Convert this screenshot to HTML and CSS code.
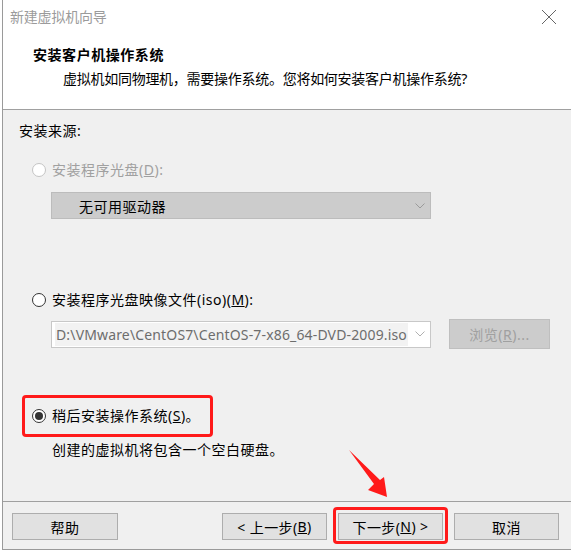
FILE: index.html
```html
<!DOCTYPE html>
<html lang="zh-CN">
<head>
<meta charset="utf-8">
<title>新建虚拟机向导</title>
<link rel="stylesheet" href="styles.css">
</head>
<body>
<div class="window">
  <div class="header">
    <div class="titlebar">
      <span class="title">新建虚拟机向导</span>
      <svg class="close" width="16" height="16" viewBox="0 0 16 16"><path d="M1 1 L15 15 M15 1 L1 15" stroke="#666" stroke-width="1" fill="none"/></svg>
    </div>
    <div class="heading">安装客户机操作系统</div>
    <div class="subtext">虚拟机如同物理机，需要操作系统。您将如何安装客户机操作系统?</div>
  </div>
  <div class="content">
    <div class="source-label">安装来源:</div>
    <div class="radio-row row1 disabled">
      <span class="radio"></span>
      <span class="label">安装程序光盘(<u>D</u>):</span>
    </div>
    <div class="combo combo-disabled">
      <span class="combo-text">无可用驱动器</span>
      <svg class="chev" width="10" height="6" viewBox="0 0 10 6"><polyline points="0.5,0.5 5,5 9.5,0.5" fill="none" stroke="#9a9a9a" stroke-width="1"/></svg>
    </div>
    <div class="radio-row row2">
      <span class="radio"></span>
      <span class="label">安装程序光盘映像文件(iso)(<u>M</u>):</span>
    </div>
    <div class="iso-row">
      <div class="combo combo-white">
        <span class="combo-text path"><span class="sel">D:\VMware\CentOS7\CentOS-7-x86_64-DVD-2009.iso</span></span>
        <svg class="chev" width="10" height="6" viewBox="0 0 10 6"><polyline points="0.5,0.5 5,5 9.5,0.5" fill="none" stroke="#b0b0b0" stroke-width="1"/></svg>
      </div>
      <div class="browse">浏览(<u>R</u>)...</div>
    </div>
    <div class="radio-row row3">
      <span class="radio checked"></span>
      <span class="label">稍后安装操作系统(<u>S</u>)。</span>
    </div>
    <div class="desc">创建的虚拟机将包含一个空白硬盘。</div>
    <div class="footer">
      <div class="btn">帮助</div>
      <div class="spacer"></div>
      <div class="btn">&lt; 上一步(<u>B</u>)</div>
      <div class="btn">下一步(<u>N</u>) &gt;</div>
      <div class="btn">取消</div>
    </div>
  </div>
  <div class="mark mark-radio"></div>
  <div class="mark mark-next"></div>
  <svg class="arrow" width="60" height="60" viewBox="0 0 60 60">
    <polygon points="1,0 32,30 36,27 39,47 20,40 26,34" fill="#ff1a1a"/>
  </svg>
</div>
</body>
</html>
```
FILE: styles.css
```css
html, body {
  margin: 0;
  padding: 0;
  background: #ffffff;
}
body {
  font-family: "Noto Sans", "Noto Sans CJK SC", sans-serif;
  font-size: 14px;
  color: #000;
}
.window {
  position: relative;
  margin-left: 2px;
  width: 568px;
  height: 549px;
  border-left: 1px solid #9a9a9a;
  border-bottom: 1px solid #9a9a9a;
  background: #f0f0f0;
  display: flex;
  flex-direction: column;
  overflow: hidden;
}
.header {
  background: #ffffff;
  height: 109px;
  border-bottom: 1px solid #a0a0a0;
  flex: none;
}
.titlebar {
  height: 34px;
  display: flex;
  align-items: center;
  justify-content: space-between;
  padding: 0 12px 0 7px;
}
.title {
  color: #9b9b9b;
  line-height: 34px;
  letter-spacing: -0.2px;
}
.close {
  display: block;
  margin-right: 2px;
}
.heading {
  margin-top: 11px;
  padding-left: 30px;
  line-height: 20px;
  font-weight: bold;
  letter-spacing: 0.55px;
}
.subtext {
  margin-top: 4px;
  padding-left: 60px;
  line-height: 20px;
  letter-spacing: -0.27px;
}
.content {
  flex: 1;
  display: flex;
  flex-direction: column;
  letter-spacing: 0.5px;
}
.source-label {
  margin-top: 11px;
  padding-left: 16px;
  line-height: 20px;
}
.radio-row {
  display: flex;
  align-items: center;
  height: 20px;
  padding-left: 29px;
}
.row1 { margin-top: 19px; }
.row2 { margin-top: 71px; }
.row3 { margin-top: 57px; }
.radio {
  width: 14px;
  height: 14px;
  box-sizing: border-box;
  border: 1px solid #333;
  border-radius: 50%;
  background: #fff;
  margin-right: 6px;
  position: relative;
  flex: none;
}
.disabled .radio { border-color: #c4c4c4; }
.disabled .label { color: #a0a0a0; }
.radio.checked::after {
  content: "";
  position: absolute;
  left: 2px;
  top: 2px;
  width: 8px;
  height: 8px;
  border-radius: 50%;
  background: #333;
}
.label { line-height: 20px; }
.combo {
  box-sizing: border-box;
  width: 380px;
  height: 27px;
  margin-left: 48px;
  display: flex;
  align-items: center;
  justify-content: space-between;
  padding-right: 5px;
  flex: none;
  letter-spacing: 0;
}
.chev { display: block; flex: none; }
.combo-disabled {
  margin-top: 12px;
  background: #cccccc;
  border: 1px solid #bcbcbc;
  padding-left: 27px;
}
.combo-disabled .combo-text { letter-spacing: 0.5px; }
.combo-white {
  background: #ffffff;
  border: 1px solid #c8c8c8;
  padding-left: 3px;
}
.path {
  color: #6d6d6d;
  white-space: nowrap;
  letter-spacing: 0.15px;
}
.sel {
  background: #f2f2f2;
  padding: 2px 1px;
}
.iso-row {
  display: flex;
  align-items: center;
  margin-top: 9px;
  height: 30px;
}
.browse {
  box-sizing: border-box;
  margin-left: 18px;
  width: 101px;
  height: 30px;
  background: #cccccc;
  border: 1px solid #bfbfbf;
  color: #a0a0a0;
  display: flex;
  align-items: center;
  justify-content: center;
}
.desc {
  margin-top: 14px;
  padding-left: 49px;
  line-height: 20px;
}
.footer {
  margin-top: auto;
  height: 48px;
  box-sizing: border-box;
  border-top: 1px solid #a0a0a0;
  padding: 11px 12px 9px 9px;
  display: flex;
  gap: 11px;
  align-items: flex-start;
  letter-spacing: 0.4px;
}
.spacer { flex: 1; }
.btn {
  box-sizing: border-box;
  width: 105px;
  height: 27px;
  background: #e1e1e1;
  border: 1px solid #adadad;
  display: flex;
  align-items: center;
  justify-content: center;
  flex: none;
}
.footer .btn:first-child { width: 106px; }
.mark {
  position: absolute;
  box-sizing: border-box;
  border: 3px solid #ff1a1a;
  border-radius: 4px;
}
.mark-radio {
  left: 19px;
  top: 395px;
  width: 191px;
  height: 42px;
}
.mark-next {
  left: 330px;
  top: 507px;
  width: 115px;
  height: 37px;
}
.arrow {
  position: absolute;
  left: 345px;
  top: 450px;
}
```
